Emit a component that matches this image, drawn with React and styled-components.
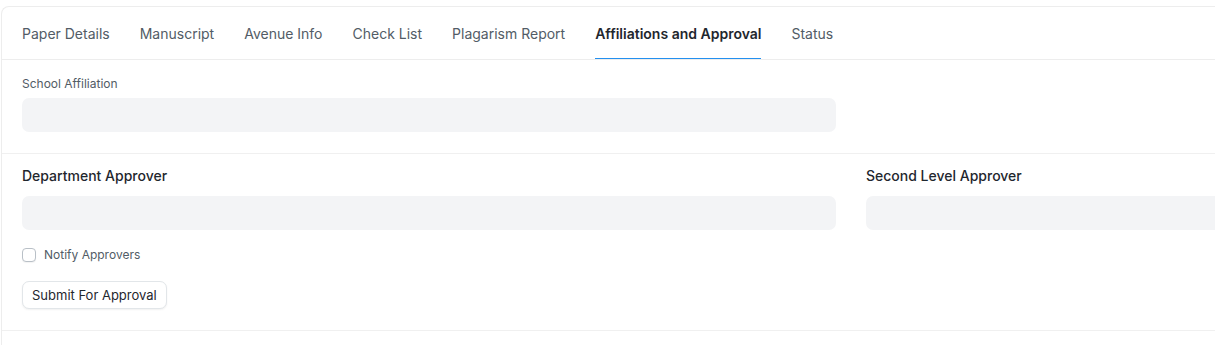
import React from "react";
import styled, { createGlobalStyle } from "styled-components";

const Global = createGlobalStyle`
  html, body { margin: 0; padding: 0; background: #ffffff; overflow: hidden; }
  body { font-family: Inter, "Noto Sans", sans-serif; -webkit-font-smoothing: antialiased; }
  * { box-sizing: border-box; }
`;

const Page = styled.div`
  padding: 6px 0 0 1px;
  width: 1215px;
  height: 345px;
  overflow: hidden;
`;

const Card = styled.div`
  width: 1800px;
  min-height: 400px;
  border: 1px solid #ededed;
  border-right: none;
  border-radius: 8px 0 0 0;
  background: #fff;
`;

const TabBar = styled.nav`
  display: flex;
  gap: 30px;
  padding: 0 20px;
  height: 53px;
  border-bottom: 1px solid #ededed;
`;

const Tab = styled.div`
  display: flex;
  align-items: center;
  height: 52px;
  padding-top: 1px;
  font-size: 14px;
  font-weight: ${(p) => (p.$active ? 600 : 400)};
  color: ${(p) => (p.$active ? "#1f272e" : "#525c66")};
  border-bottom: 1px solid ${(p) => (p.$active ? "#2490ef" : "transparent")};
  white-space: nowrap;
`;

const Section = styled.section`
  padding: ${(p) => p.$pad};
  border-bottom: 1px solid #f0f0f0;
`;

const Columns = styled.div`
  display: grid;
  grid-template-columns: 814px 814px;
  column-gap: 30px;
`;

const Column = styled.div`
  display: flex;
  flex-direction: column;
`;

const SmallLabel = styled.label`
  font-size: 12px;
  line-height: 16px;
  color: #525c66;
  margin-bottom: 6px;
`;

const BoldLabel = styled.label`
  font-size: 14px;
  line-height: 20px;
  font-weight: 500;
  color: #1f272e;
  margin-bottom: 10px;
`;

const Input = styled.div`
  height: 34px;
  border-radius: 7px;
  background: #f3f4f6;
`;

const CheckRow = styled.label`
  display: flex;
  align-items: center;
  gap: 8px;
  margin-top: 18px;
  font-size: 12px;
  line-height: 14px;
  color: #525c66;
`;

const Box = styled.span`
  width: 14px;
  height: 14px;
  border: 1px solid #b9c0c7;
  border-radius: 4px;
  background: #fff;
  box-shadow: 0 1px 1px rgba(0, 0, 0, 0.05);
`;

const Button = styled.button`
  align-self: flex-start;
  margin-top: 19px;
  height: 28px;
  padding: 0 9px;
  font-family: Inter, "Noto Sans", sans-serif;
  font-size: 13px;
  color: #1f272e;
  background: #fff;
  border: 1px solid #e2e6e9;
  border-radius: 7px;
  box-shadow: 0 1px 2px rgba(0, 0, 0, 0.06);
`;

const tabs = [
  "Paper Details",
  "Manuscript",
  "Avenue Info",
  "Check List",
  "Plagarism Report",
  "Affiliations and Approval",
  "Status",
];

export default function App() {
  return (
    <>
      <Global />
      <Page>
        <Card>
          <TabBar>
            {tabs.map((t) => (
              <Tab key={t} $active={t === "Affiliations and Approval"}>
                {t}
              </Tab>
            ))}
          </TabBar>
          <Section $pad="16px 20px 21px">
            <Columns>
              <Column>
                <SmallLabel>School Affiliation</SmallLabel>
                <Input />
              </Column>
            </Columns>
          </Section>
          <Section $pad="12px 20px 21px">
            <Columns>
              <Column>
                <BoldLabel>Department Approver</BoldLabel>
                <Input />
                <CheckRow>
                  <Box />
                  Notify Approvers
                </CheckRow>
                <Button>Submit For Approval</Button>
              </Column>
              <Column>
                <BoldLabel>Second Level Approver</BoldLabel>
                <Input />
              </Column>
            </Columns>
          </Section>
        </Card>
      </Page>
    </>
  );
}
